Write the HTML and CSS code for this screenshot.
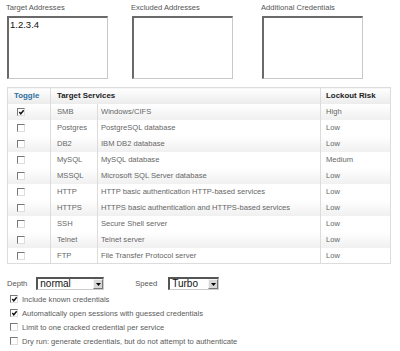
FILE: index.html
```html
<!DOCTYPE html>
<html>
<head>
<meta charset="utf-8">
<link rel="stylesheet" href="styles.css">
</head>
<body>
<div class="page">
  <div class="fields">
    <div class="field f1">
      <div class="flabel">Target Addresses</div>
      <div class="ta">1.2.3.4</div>
    </div>
    <div class="field f2">
      <div class="flabel">Excluded Addresses</div>
      <div class="ta"></div>
    </div>
    <div class="field f3">
      <div class="flabel">Additional Credentials</div>
      <div class="ta"></div>
    </div>
  </div>

  <table class="svc">
    <colgroup>
      <col class="w1"><col class="w2"><col class="w3"><col class="w4">
    </colgroup>
    <thead>
      <tr>
        <th class="c1 toggle">Toggle</th>
        <th class="c2" colspan="2">Target Services</th>
        <th class="c4">Lockout Risk</th>
      </tr>
    </thead>
    <tbody>
      <tr class="alt"><td class="c1"><span class="cb on"><svg viewBox="0 0 8 8"><polyline points="1.5,3.5 3.2,5.5 6.5,1.5" /></svg></span></td><td class="c2">SMB</td><td class="c3">Windows/CIFS</td><td class="c4">High</td></tr>
      <tr><td class="c1"><span class="cb"></span></td><td class="c2">Postgres</td><td class="c3">PostgreSQL database</td><td class="c4">Low</td></tr>
      <tr class="alt"><td class="c1"><span class="cb"></span></td><td class="c2">DB2</td><td class="c3">IBM DB2 database</td><td class="c4">Low</td></tr>
      <tr><td class="c1"><span class="cb"></span></td><td class="c2">MySQL</td><td class="c3">MySQL database</td><td class="c4">Medium</td></tr>
      <tr class="alt"><td class="c1"><span class="cb"></span></td><td class="c2">MSSQL</td><td class="c3">Microsoft SQL Server database</td><td class="c4">Low</td></tr>
      <tr><td class="c1"><span class="cb"></span></td><td class="c2">HTTP</td><td class="c3">HTTP basic authentication HTTP-based services</td><td class="c4">Low</td></tr>
      <tr class="alt"><td class="c1"><span class="cb"></span></td><td class="c2">HTTPS</td><td class="c3">HTTPS basic authentication and HTTPS-based services</td><td class="c4">Low</td></tr>
      <tr><td class="c1"><span class="cb"></span></td><td class="c2">SSH</td><td class="c3">Secure Shell server</td><td class="c4">Low</td></tr>
      <tr class="alt"><td class="c1"><span class="cb"></span></td><td class="c2">Telnet</td><td class="c3">Telnet server</td><td class="c4">Low</td></tr>
      <tr><td class="c1"><span class="cb"></span></td><td class="c2">FTP</td><td class="c3">File Transfer Protocol server</td><td class="c4">Low</td></tr>
    </tbody>
  </table>

  <div class="opts">
    <span class="olabel">Depth</span>
    <span class="sel depth"><span class="val">normal</span><span class="btn"><svg viewBox="0 0 7 4"><polygon points="0,0 7,0 3.5,4"/></svg></span></span>
    <span class="olabel speed-l">Speed</span>
    <span class="sel speed"><span class="val">Turbo</span><span class="btn"><svg viewBox="0 0 7 4"><polygon points="0,0 7,0 3.5,4"/></svg></span></span>
  </div>

  <div class="checks">
    <div class="chk"><span class="cb on"><svg viewBox="0 0 8 8"><polyline points="1.5,3.5 3.2,5.5 6.5,1.5" /></svg></span><span>Include known credentials</span></div>
    <div class="chk"><span class="cb on"><svg viewBox="0 0 8 8"><polyline points="1.5,3.5 3.2,5.5 6.5,1.5" /></svg></span><span>Automatically open sessions with guessed credentials</span></div>
    <div class="chk"><span class="cb"></span><span>Limit to one cracked credential per service</span></div>
    <div class="chk"><span class="cb"></span><span>Dry run: generate credentials, but do not attempt to authenticate</span></div>
  </div>
</div>
</body>
</html>
```

FILE: styles.css
```css
html, body {
  margin: 0;
  padding: 0;
  background: #fff;
}
body {
  font-family: "Liberation Sans", Arial, sans-serif;
  font-size: 7.6px;
  color: #5a5a5a;
}
.page {
  padding: 3px 0 0 7px;
  width: 383px;
}
.fields {
  display: flex;
  height: 84px;
}
.field { display: flex; flex-direction: column; }
.f1 { width: 125px; }
.f2 { width: 130px; }
.f3 { width: 101px; }
.flabel {
  height: 13px;
  line-height: 10px;
  color: #555;
  margin-left: -1px;
}
.ta {
  box-sizing: border-box;
  width: 101px;
  height: 63px;
  border-top: 2px solid #6a6a6a;
  border-left: 2px solid #6a6a6a;
  border-right: 1px solid #c8c8c8;
  border-bottom: 1px solid #c8c8c8;
  color: #111;
  font-size: 9.5px;
  padding: 1px 1px;
  line-height: 11px;
}
.svc {
  border-collapse: collapse;
  width: 383px;
  table-layout: fixed;
  border: 1px solid #dcdcdc;
}
.w1 { width: 43px; }
.w2 { width: 47px; }
.w3 { width: 223px; }
.w4 { width: 70px; }
.svc th, .svc td {
  height: 16px;
  padding: 0;
  text-align: left;
  white-space: nowrap;
  overflow: hidden;
  box-sizing: border-box;
}
.svc th {
  font-weight: bold;
  color: #222;
  font-size: 7.9px;
  background: linear-gradient(#ffffff, #ebebeb);
}
.svc th.toggle { color: #2e6f9e; }
.svc .c1 { padding-left: 6px; border-right: 1px solid #dcdcdc; }
.svc .c2 { padding-left: 6px; border-right: 1px solid #dcdcdc; }
.svc .c3 { padding-left: 3px; border-right: 1px solid #dcdcdc; }
.svc .c4 { padding-left: 5px; }
.svc td { color: #666; }
.svc tbody tr { background: #fff; }
.svc tbody tr.alt { background: linear-gradient(#ffffff, #f0f0f0); }
.svc td.c1 { padding-left: 9px; }

.cb {
  display: inline-block;
  box-sizing: border-box;
  width: 8px;
  height: 8px;
  border-top: 1px solid #777;
  border-left: 1px solid #777;
  border-right: 1px solid #ddd;
  border-bottom: 1px solid #ddd;
  background: #fff;
  vertical-align: middle;
}
.cb svg {
  display: block;
  width: 7px;
  height: 7px;
  margin: -0.5px 0 0 -0.5px;
}
.cb polyline {
  fill: none;
  stroke: #111;
  stroke-width: 1.6;
}

.opts {
  display: flex;
  align-items: center;
  margin-top: 13px;
  height: 13px;
}
.olabel { color: #555; }
.speed-l { margin-left: 31px; }
.sel {
  box-sizing: border-box;
  display: flex;
  align-items: center;
  height: 13px;
  border-top: 2px solid #555;
  border-left: 2px solid #555;
  border-right: 1px solid #ccc;
  border-bottom: 1px solid #ccc;
  background: #fff;
}
.sel.depth { width: 68px; margin-left: 9px; }
.sel.speed { width: 51px; margin-left: 11px; }
.sel .val {
  flex: 1;
  font-size: 10px;
  color: #111;
  padding-left: 2px;
  line-height: 10px;
}
.sel .btn {
  box-sizing: border-box;
  width: 10px;
  height: 10px;
  background: #d8d8d8;
  border: 1px solid;
  border-color: #f4f4f4 #777 #777 #f4f4f4;
  display: flex;
  align-items: center;
  justify-content: center;
}
.sel .btn svg { width: 5px; height: 3px; fill: #000; }

.checks {
  margin-top: 2px;
  margin-left: 3px;
}
.chk {
  display: flex;
  align-items: center;
  height: 14px;
  gap: 4px;
}
.chk .cb { width: 8px; height: 8px; }
```
